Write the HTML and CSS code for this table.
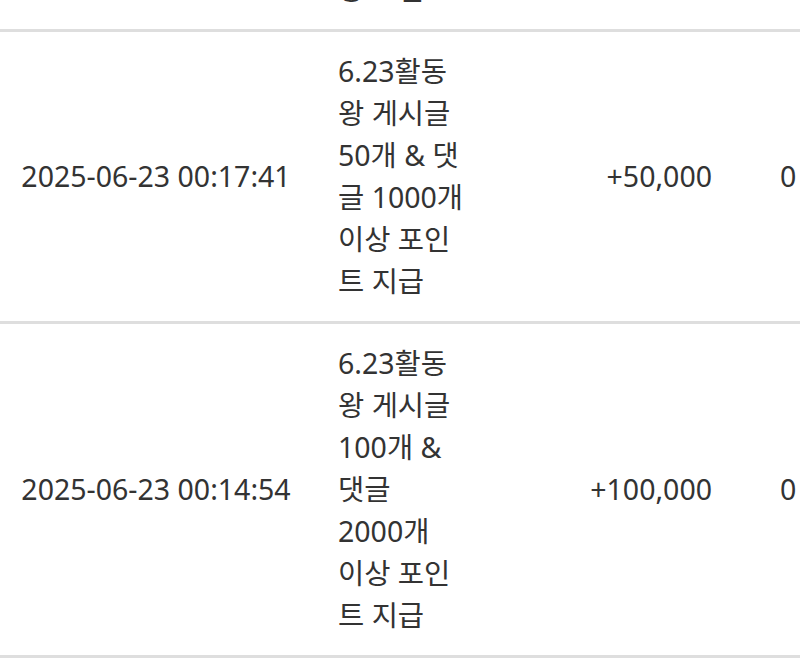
FILE: index.html
```html
<!DOCTYPE html>
<html lang="ko">
<head>
<meta charset="utf-8">
<link rel="stylesheet" href="styles.css">
</head>
<body>
<div class="viewport">
<table class="history">
  <colgroup>
    <col class="c-date"><col class="c-desc"><col class="c-amt"><col class="c-bal">
  </colgroup>
  <tbody>
    <tr>
      <td class="date">2025-06-23 00:20:12</td>
      <td class="desc">6.23활동 왕 포인트</td>
      <td class="amt">+10,000</td>
      <td class="bal">0</td>
    </tr>
    <tr>
      <td class="date">2025-06-23 00:17:41</td>
      <td class="desc">6.23활동 왕 게시글 <span class="qty">50개</span> &amp; 댓글 <span class="qty">1000개</span> <span class="qty">이상</span> 포인트 지급</td>
      <td class="amt">+50,000</td>
      <td class="bal">0</td>
    </tr>
    <tr>
      <td class="date">2025-06-23 00:14:54</td>
      <td class="desc">6.23활동 왕 게시글 <span class="qty">100개</span> &amp; 댓글 <span class="qty">2000개</span> <span class="qty">이상</span> 포인트 지급</td>
      <td class="amt">+100,000</td>
      <td class="bal">0</td>
    </tr>
  </tbody>
</table>
</div>
</body>
</html>
```

FILE: styles.css
```css
html, body {
  margin: 0;
  padding: 0;
  background: #fff;
}
.viewport {
  width: 800px;
  height: 666px;
  overflow: hidden;
}
.history {
  border-collapse: collapse;
  table-layout: fixed;
  width: 860px;
  margin-top: -92px;
  font-family: "Noto Sans", "Noto Sans CJK KR", sans-serif;
  font-size: 28.5px;
  line-height: 42px;
  color: #333;
}
.c-date { width: 312px; }
.c-desc { width: 154px; }
.c-amt { width: 272px; }
.c-bal { width: 122px; }
.history td {
  border-bottom: 3px solid #dedede;
  padding: 18px 0 19px;
  vertical-align: middle;
}
.history td.date {
  text-align: center;
  white-space: nowrap;
}
.history td.desc {
  padding-left: 26px;
  text-align: left;
}
.history td.amt {
  text-align: right;
  padding-right: 26px;
}
.history td.bal {
  text-align: left;
  padding-left: 42px;
}
.qty {
  white-space: nowrap;
}
```
